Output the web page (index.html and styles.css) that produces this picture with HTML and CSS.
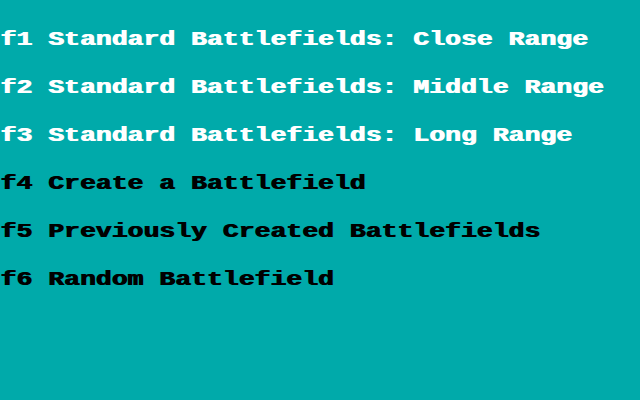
FILE: index.html
```html
<!DOCTYPE html>
<html lang="en">
<head>
    <meta charset="UTF-8">
    <title>Battlefields</title>
    <link rel="stylesheet" href="styles.css">
</head>
<body>
    <div class="menu">
        <div class="item light">f1 Standard Battlefields: Close Range</div>
        <div class="item light">f2 Standard Battlefields: Middle Range</div>
        <div class="item light">f3 Standard Battlefields: Long Range</div>
        <div class="item dark">f4 Create a Battlefield</div>
        <div class="item dark">f5 Previously Created Battlefields</div>
        <div class="item dark">f6 Random Battlefield</div>
    </div>
</body>
</html>
```

FILE: styles.css
```css
* {
    margin: 0;
    padding: 0;
    box-sizing: border-box;
}

body {
    background: #00aaaa;
    width: 640px;
    height: 400px;
    overflow: hidden;
    font-family: "Liberation Mono", "DejaVu Sans Mono", monospace;
    font-weight: bold;
}

.menu {
    display: flex;
    flex-direction: column;
    align-items: flex-start;
    gap: 32px;
    padding-top: 32px;
}

/* 16px character cells, like the old text mode */
.item {
    width: max-content;
    height: 16px;
    line-height: 16px;
    font-size: 21px;
    white-space: nowrap;
    transform: scaleX(1.26);
    transform-origin: left center;
}

.light {
    color: #ffffff;
    text-shadow: 1px 0 0 #ffffff;
}

.dark {
    color: #000000;
    text-shadow: 1px 0 0 #000000;
}
```
